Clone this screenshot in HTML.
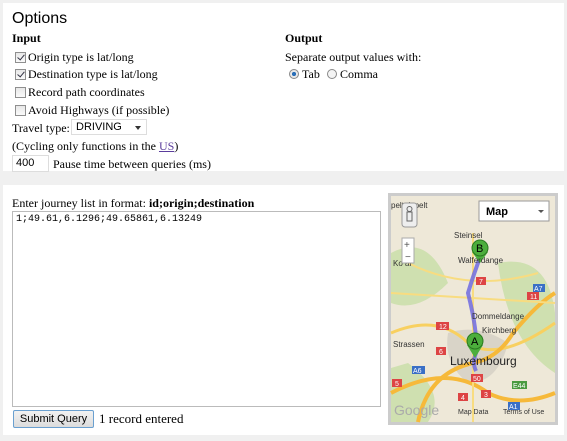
<!DOCTYPE html>
<html><head><style>
body{margin:0;width:567px;height:441px;background:#f0f0f0;font-family:"Liberation Serif",serif;font-size:12px;color:#000;position:relative;overflow:hidden}
.p{position:absolute;background:#fff}
.a{position:absolute;white-space:nowrap}
.cb{position:absolute;width:11px;height:11px;border:1px solid #8f8f8f;background:linear-gradient(#e8e8e8,#fafafa);box-sizing:border-box}
.ck:after{content:"";position:absolute;left:3px;top:0px;width:3px;height:6px;border:solid #334;border-width:0 1.5px 1.5px 0;transform:rotate(40deg)}
.sans{font-family:"Liberation Sans",sans-serif}
</style></head><body>
<div class="p" style="left:3px;top:3px;width:561px;height:168px"></div>
<div class="a sans" style="left:12px;top:10px;font-size:16px">Options</div>
<div class="a" style="left:12px;top:31px;font-weight:bold">Input</div>
<div class="cb ck" style="left:15px;top:52px"></div><div class="a" style="left:28px;top:50px">Origin type is lat/long</div>
<div class="cb ck" style="left:15px;top:69px"></div><div class="a" style="left:28px;top:67px">Destination type is lat/long</div>
<div class="cb" style="left:15px;top:87px"></div><div class="a" style="left:28px;top:85px">Record path coordinates</div>
<div class="cb" style="left:15px;top:105px"></div><div class="a" style="left:28px;top:103px">Avoid Highways (if possible)</div>
<div class="a" style="left:12px;top:121px">Travel type:</div>
<div class="a sans" style="left:71px;top:119px;width:76px;height:16px;border:1px solid #ddd;font-size:11px;line-height:15px;padding-left:4px;box-sizing:border-box">DRIVING<span style="position:absolute;right:5px;top:6px;border:3px solid transparent;border-top:4px solid #333"></span></div>
<div class="a" style="left:12px;top:139px">(Cycling only functions in the <span style="color:#5a3c9c;text-decoration:underline">US</span>)</div>
<div class="a sans" style="left:12px;top:155px;width:37px;height:17px;border:1px solid #ddd;box-sizing:border-box;font-size:11px;padding-left:3px;line-height:15px">400</div>
<div class="a" style="left:53px;top:157px">Pause time between queries (ms)</div>
<div class="a" style="left:285px;top:31px;font-weight:bold">Output</div>
<div class="a" style="left:285px;top:50px">Separate output values with:</div>
<div class="a" style="left:289px;top:69px;width:10px;height:10px;border-radius:50%;border:1px solid #888;box-sizing:border-box;background:radial-gradient(#2a6fb8 35%,#e8e8e8 40%)"></div>
<div class="a" style="left:302px;top:67px">Tab</div>
<div class="a" style="left:327px;top:69px;width:10px;height:10px;border-radius:50%;border:1px solid #888;box-sizing:border-box;background:#f4f4f4"></div>
<div class="a" style="left:340px;top:67px">Comma</div>

<div class="p" style="left:3px;top:185px;width:561px;height:250px"></div>
<div class="a" style="left:12px;top:196px">Enter journey list in format: <b>id;origin;destination</b></div>
<div class="a" style="left:12px;top:211px;width:369px;height:196px;border:1px solid #bbb;box-sizing:border-box"></div>
<div class="a" style="left:16px;top:214px;font-family:'Liberation Mono',monospace;font-size:10px">1;49.61,6.1296;49.65861,6.13249</div>
<div class="a sans" style="left:13px;top:410px;width:81px;height:18px;border:1px solid #6aa0d0;border-radius:2px;background:linear-gradient(#f2f2f2,#dcdcdc);box-sizing:border-box;font-size:11px;text-align:center;line-height:16px">Submit Query</div>
<div class="a" style="left:99px;top:411px;font-size:13px">1 record entered</div>

<svg class="a" style="left:388px;top:193px" width="170" height="232" viewBox="0 0 170 232">
<rect width="170" height="232" fill="#ccc"/>
<rect x="3" y="3" width="164" height="226" fill="#eee8d8"/>
<path d="M3 60 Q40 40 60 90 Q30 120 3 110Z M110 70 Q160 60 167 120 L167 180 Q120 150 110 70Z M20 170 Q60 200 40 229 L3 229 L3 175Z" fill="#cfe0b0"/>
<path d="M60 140 Q90 130 120 150 Q110 190 80 190 Q55 170 60 140Z" fill="#d9d4c8"/>
<path d="M3 140 Q50 120 80 150 Q110 170 167 130" stroke="#f8d060" stroke-width="3" fill="none"/>
<path d="M3 200 Q60 170 100 200 Q130 215 167 200" stroke="#f6b93a" stroke-width="4" fill="none"/>
<path d="M30 229 Q40 180 85 170 Q110 165 125 140 Q150 110 167 100" stroke="#f6b93a" stroke-width="4" fill="none"/>
<path d="M85 40 L85 229 M20 70 Q80 100 150 80 M3 100 L167 110" stroke="#f8dc80" stroke-width="2" fill="none"/>
<path d="M93 62 Q86 80 80 100 Q90 140 88 160 Q84 170 88 178" stroke="#6f6ae0" stroke-width="4" fill="none" opacity=".85"/>
<path d="M84 59 L92 70 L100 59Z" fill="#4cae3c"/>
<circle cx="92" cy="55" r="8" fill="#4cae3c" stroke="#2a7a20"/>
<text x="88" y="59" font-family="Liberation Sans" font-size="11">B</text>
<path d="M79 152 L87 165 L95 152Z" fill="#4cae3c"/>
<circle cx="87" cy="148" r="8" fill="#4cae3c" stroke="#2a7a20"/>
<text x="83" y="152" font-family="Liberation Sans" font-size="11">A</text>
<g font-family="Liberation Sans" font-size="8" fill="#333">
<text x="66" y="45">Steinsel</text><text x="70" y="70">Walferdange</text><text x="84" y="126">Dommeldange</text><text x="94" y="140">Kirchberg</text><text x="5" y="154">Strassen</text><text x="3" y="15">pelt  rispelt</text><text x="5" y="73">Ko   al</text>
<text x="62" y="172" font-size="12" fill="#222">Luxembourg</text>
<text x="70" y="221" font-size="7">Map Data</text><text x="115" y="221" font-size="7">Terms of Use</text>
<text x="6" y="222" font-size="14" fill="#aaa">Google</text></g>
<g font-family="Liberation Sans" font-size="7" fill="#fff">
<rect x="48" y="129" width="13" height="8" fill="#d44"/><text x="51" y="136">12</text>
<rect x="139" y="99" width="12" height="8" fill="#d44"/><text x="142" y="106">11</text>
<rect x="48" y="154" width="10" height="8" fill="#d44"/><text x="51" y="161">6</text>
<rect x="83" y="181" width="12" height="8" fill="#d44"/><text x="85" y="188">50</text>
<rect x="70" y="200" width="10" height="8" fill="#d44"/><text x="73" y="207">4</text>
<rect x="93" y="197" width="10" height="8" fill="#d44"/><text x="96" y="204">3</text>
<rect x="4" y="186" width="10" height="8" fill="#d44"/><text x="7" y="193">5</text>
<rect x="88" y="84" width="10" height="8" fill="#d44"/><text x="91" y="91">7</text>
<rect x="145" y="91" width="12" height="8" fill="#3a6fc6"/><text x="146" y="98">A7</text>
<rect x="24" y="173" width="13" height="8" fill="#3a6fc6"/><text x="25" y="180">A6</text>
<rect x="120" y="209" width="12" height="8" fill="#3a6fc6"/><text x="121" y="216">A1</text>
<rect x="124" y="188" width="15" height="8" fill="#4a9a40"/><text x="125" y="195">E44</text></g>
<rect x="91" y="8" width="70" height="20" fill="#fff" stroke="#999"/>
<text x="98" y="22" font-family="Liberation Sans" font-size="11" font-weight="bold">Map</text>
<path d="M150 17 l6 0 l-3 3z" fill="#555"/>
<rect x="14" y="10" width="15" height="24" rx="3" fill="#eee" stroke="#999"/>
<circle cx="21.5" cy="16" r="2.5" fill="none" stroke="#666"/><path d="M19 19h5v9h-5z" fill="none" stroke="#666"/>
<rect x="14" y="45" width="12" height="25" fill="#fff" stroke="#aaa"/>
<text x="16" y="55" font-family="Liberation Sans" font-size="10" fill="#555">+</text><text x="17" y="67" font-family="Liberation Sans" font-size="10" fill="#555">−</text>
</svg>
</body></html>
